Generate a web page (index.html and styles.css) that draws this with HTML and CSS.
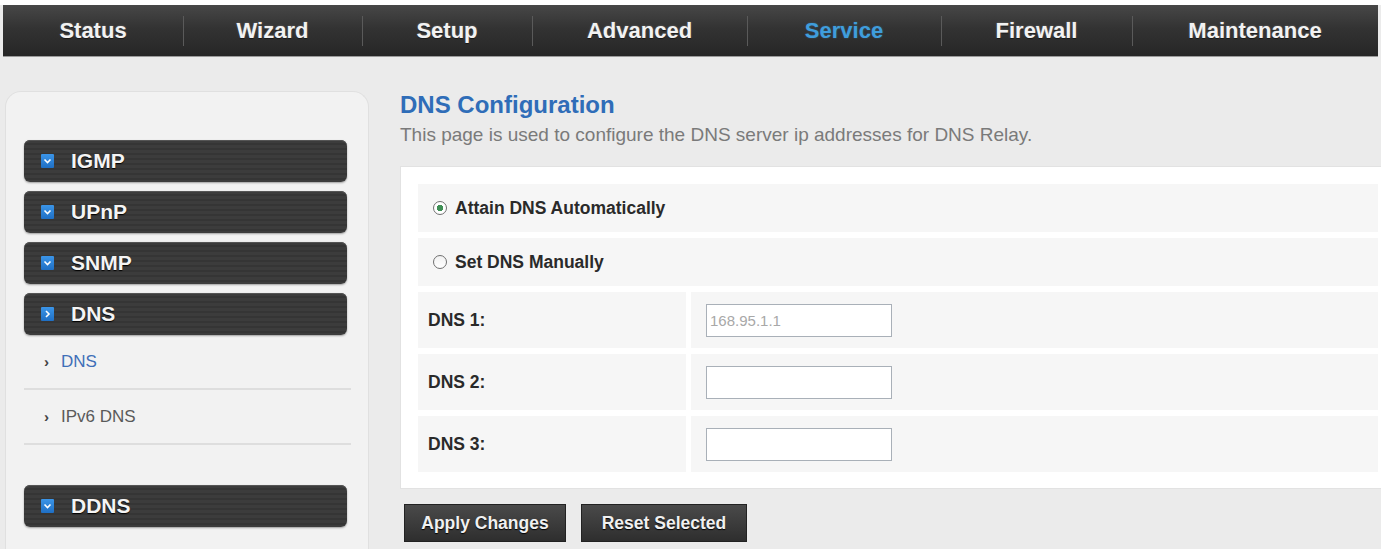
FILE: index.html
```html
<!DOCTYPE html>
<html lang="en">
<head>
  <meta charset="UTF-8">
  <title>DNS Configuration</title>
  <link rel="stylesheet" href="styles.css">
</head>
<body>
  <nav class="topnav">
    <a class="nav-item">Status</a>
    <a class="nav-item sep">Wizard</a>
    <a class="nav-item sep">Setup</a>
    <a class="nav-item sep">Advanced</a>
    <a class="nav-item sep active">Service</a>
    <a class="nav-item sep">Firewall</a>
    <a class="nav-item sep">Maintenance</a>
  </nav>

  <div class="page">
    <aside class="sidebar">
      <div class="menu-bar"><span class="menu-icon"><svg viewBox="0 0 13 14" width="13" height="14"><path d="M3.5 5.5 L6.5 8.5 L9.5 5.5" fill="none" stroke="#fff" stroke-width="1.6"/></svg></span>IGMP</div>
      <div class="menu-bar"><span class="menu-icon"><svg viewBox="0 0 13 14" width="13" height="14"><path d="M3.5 5.5 L6.5 8.5 L9.5 5.5" fill="none" stroke="#fff" stroke-width="1.6"/></svg></span>UPnP</div>
      <div class="menu-bar"><span class="menu-icon"><svg viewBox="0 0 13 14" width="13" height="14"><path d="M3.5 5.5 L6.5 8.5 L9.5 5.5" fill="none" stroke="#fff" stroke-width="1.6"/></svg></span>SNMP</div>
      <div class="menu-bar open"><span class="menu-icon"><svg viewBox="0 0 13 14" width="13" height="14"><path d="M5 4 L8 7 L5 10" fill="none" stroke="#fff" stroke-width="1.6"/></svg></span>DNS</div>
      <ul class="submenu">
        <li class="current"><span class="arrow">&rsaquo;</span>DNS</li>
        <li><span class="arrow">&rsaquo;</span>IPv6 DNS</li>
      </ul>
      <div class="menu-bar"><span class="menu-icon"><svg viewBox="0 0 13 14" width="13" height="14"><path d="M3.5 5.5 L6.5 8.5 L9.5 5.5" fill="none" stroke="#fff" stroke-width="1.6"/></svg></span>DDNS</div>
    </aside>

    <main class="content">
      <h1 class="title">DNS Configuration</h1>
      <p class="intro">This page is used to configure the DNS server ip addresses for DNS Relay.</p>

      <div class="form-box">
        <div class="row short">
          <label class="radio-label"><input type="radio" name="mode" class="radio" checked>Attain DNS Automatically</label>
        </div>
        <div class="row short">
          <label class="radio-label"><input type="radio" name="mode" class="radio">Set DNS Manually</label>
        </div>
        <div class="row field">
          <div class="cell-label">DNS 1:</div>
          <div class="cell-value"><input type="text" class="text-input disabled" value="168.95.1.1"></div>
        </div>
        <div class="row field">
          <div class="cell-label">DNS 2:</div>
          <div class="cell-value"><input type="text" class="text-input"></div>
        </div>
        <div class="row field">
          <div class="cell-label">DNS 3:</div>
          <div class="cell-value"><input type="text" class="text-input"></div>
        </div>
      </div>

      <div class="buttons">
        <button class="btn apply">Apply Changes</button>
        <button class="btn reset">Reset Selected</button>
      </div>
    </main>
  </div>
</body>
</html>
```

FILE: styles.css
```css
/* Router web UI - DNS page */
* {
  margin: 0;
  padding: 0;
  box-sizing: border-box;
}

body {
  font-family: 'Liberation Sans', Arial, sans-serif;
  background: #ebebeb;
  height: 549px;
  overflow: hidden;
  border-top: 5px solid #fff;
}

/* top navigation */
.topnav {
  display: grid;
  grid-template-columns: 180px 179px 170px 215px 194px 191px 1fr;
  height: 52px;
  margin: 0 3px;
  background: linear-gradient(#474747, #333 45%, #262626);
  border-bottom: 1px solid #9a9a9a;
}

.nav-item {
  display: flex;
  align-items: center;
  justify-content: center;
  color: #f2f2f2;
  font-size: 22px;
  font-weight: bold;
  text-shadow: 0 0 2px rgba(255, 255, 255, 0.35), 0 1px 1px #000;
  cursor: pointer;
}

.nav-item.sep {
  background: linear-gradient(#5a5a5a, #5a5a5a) left center / 1px 30px no-repeat;
}

.nav-item.active {
  color: #3f9ddc;
  text-shadow: 0 0 2px rgba(63, 157, 220, 0.4);
}

/* layout */
.page {
  display: flex;
  padding-top: 34px;
}

.sidebar {
  width: 364px;
  height: 460px;
  margin-left: 5px;
  padding: 48px 21px 0 18px;
  background: #f2f2f2;
  border: 1px solid #e0e0e0;
  border-bottom: none;
  border-radius: 16px 16px 0 0;
}

.menu-bar {
  display: flex;
  align-items: center;
  height: 42px;
  margin-bottom: 9px;
  padding-left: 17px;
  border-radius: 6px;
  background: repeating-linear-gradient(#3c3c3c 0, #3c3c3c 3px, #353535 3px, #353535 5px);
  box-shadow: 0 1px 2px rgba(0, 0, 0, 0.35), inset 0 1px 0 #555;
  color: #f4f4f4;
  font-size: 21px;
  font-weight: bold;
  text-shadow: 0 1px 1px #000;
}

.menu-icon {
  display: inline-flex;
  width: 13px;
  height: 14px;
  margin-right: 17px;
  background: linear-gradient(#3b95e8, #1f6fc4);
  border-radius: 1px;
}

.menu-bar.open {
  margin-bottom: 0;
}

.submenu {
  list-style: none;
  margin: 0 -4px 40px 0;
}

.submenu li {
  display: flex;
  align-items: center;
  height: 55px;
  padding-left: 20px;
  border-bottom: 2px solid #dedede;
  color: #5a5a5a;
  font-size: 17px;
}

.submenu li.current {
  color: #3f6fb8;
}

.submenu .arrow {
  color: #444;
  font-size: 15px;
  font-weight: bold;
  margin-right: 12px;
}

/* main content */
.content {
  flex: 1;
  padding-left: 31px;
}

.title {
  color: #2f6db8;
  font-size: 24px;
  font-weight: bold;
  line-height: 28px;
}

.intro {
  color: #7a7a7a;
  font-size: 19px;
  line-height: 22px;
  margin-top: 5px;
}

.form-box {
  margin-top: 20px;
  padding: 17px 3px 16px 17px;
  background: #fff;
  border: 1px solid #e2e2e2;
  border-right: none;
  display: flex;
  flex-direction: column;
  gap: 6px;
}

.row {
  display: flex;
  background: #f6f6f6;
}

.row.short {
  height: 48px;
  align-items: center;
  padding-left: 15px;
}

.row.field {
  height: 56px;
  background: #fff;
  gap: 5px;
}

.radio-label {
  display: flex;
  align-items: center;
  color: #2a2a2a;
  font-size: 17.5px;
  font-weight: bold;
}

.radio {
  appearance: none;
  width: 14px;
  height: 14px;
  margin-right: 8px;
  border: 1px solid #707070;
  border-radius: 50%;
  background: linear-gradient(#f2f2f2, #fff);
}

.radio:checked {
  background: radial-gradient(circle, #3f8f55 0, #3f8f55 3px, #fff 3.5px);
}

.cell-label {
  width: 268px;
  display: flex;
  align-items: center;
  padding-left: 10px;
  background: #f6f6f6;
  color: #2a2a2a;
  font-size: 17.5px;
  font-weight: bold;
}

.cell-value {
  flex: 1;
  display: flex;
  align-items: center;
  padding-left: 15px;
  background: #f6f6f6;
}

.text-input {
  width: 186px;
  height: 33px;
  padding: 0 3px;
  border: 1px solid #a9b0b8;
  background: #fff;
  font-family: 'Liberation Sans', Arial, sans-serif;
  font-size: 15px;
  color: #333;
}

.text-input.disabled {
  color: #a8a8a8;
}

.buttons {
  display: flex;
  gap: 15px;
  margin-top: 15px;
  padding-left: 4px;
}

.btn {
  height: 38px;
  background: linear-gradient(#4a4a4a, #2e2e2e);
  border: 1px solid #222;
  color: #f0f0f0;
  font-family: 'Liberation Sans', Arial, sans-serif;
  font-size: 17.5px;
  font-weight: bold;
  text-shadow: 0 1px 1px #000;
  cursor: pointer;
}

.apply {
  width: 162px;
}

.reset {
  width: 166px;
}
```
